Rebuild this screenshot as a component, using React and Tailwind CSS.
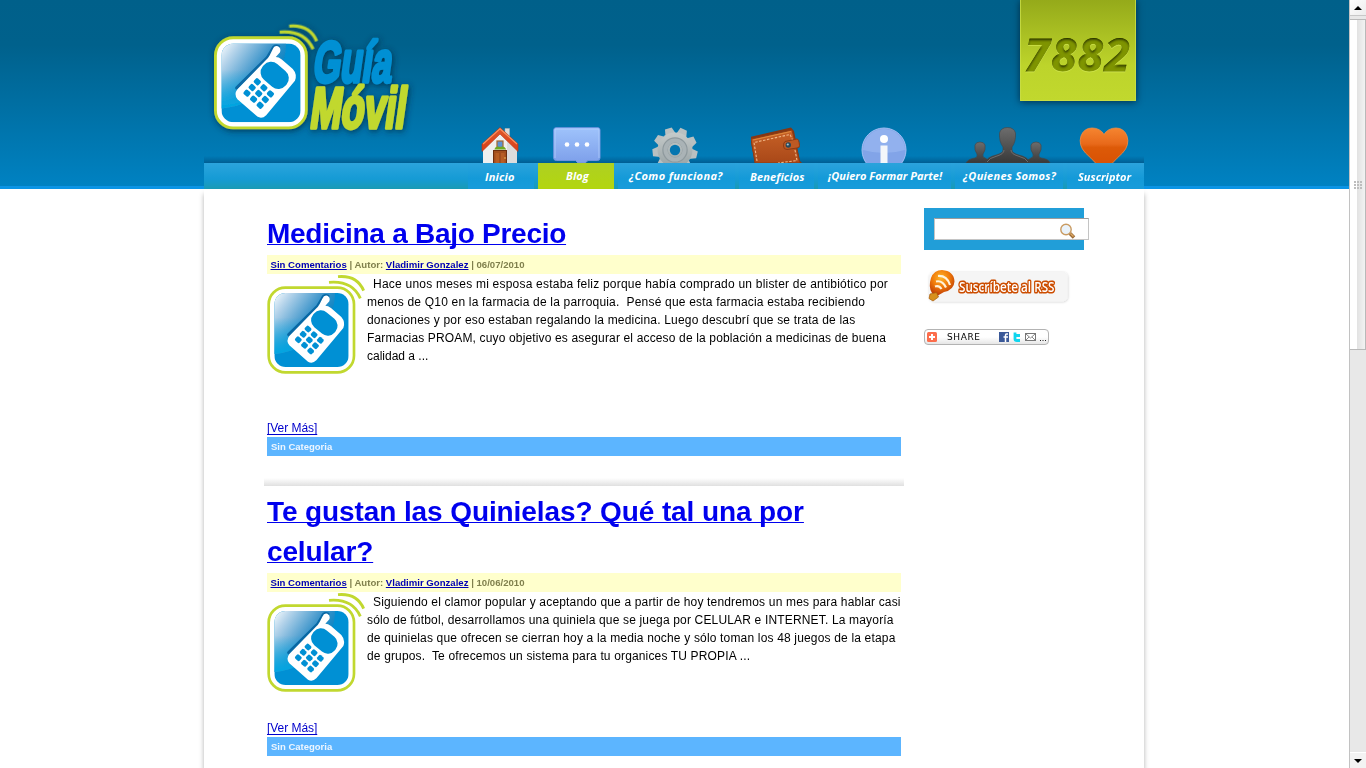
import React from "react";

function PhoneMark({ badge = false }) {
  const id = badge ? "badge" : "post";
  return (
    <>
      <defs>
        <linearGradient id={`shine-${id}`} x1="0" y1="0" x2="0.75" y2="0.55">
          <stop offset="0" stopColor="#f8fcfe" />
          <stop offset="0.25" stopColor="#b4d3ea" />
          <stop offset="0.7" stopColor="#3f96cb" />
          <stop offset="1" stopColor="#0f86c4" />
        </linearGradient>
        <linearGradient id={`low-${id}`} x1="0" y1="0" x2="0" y2="1">
          <stop offset="0.4" stopColor="#00a6e2" stopOpacity="0" />
          <stop offset="1" stopColor="#00a6e2" stopOpacity="1" />
        </linearGradient>
        <clipPath id={`clip-${id}`}>
          <rect x="58" y="249" width="223" height="222" rx="34" />
        </clipPath>
      </defs>
      <rect x="41" y="233" width="256" height="254" rx="50" fill="#fff" stroke="#c1d82f" strokeWidth="8" />
      <g clipPath={`url(#clip-${id})`}>
        <rect x="58" y="249" width="223" height="222" fill="#0090d4" />
        <path d="M58 249H240C240 330 180 420 58 432Z" fill={`url(#shine-${id})`} />
        <path d="M58 249H240C240 330 180 420 58 432Z" fill={`url(#low-${id})`} />
      </g>
      <path d="M101 374L188 288L201 266Q208 252 219 258" fill="none" stroke="#0868a4" strokeWidth="9" strokeLinecap="round" strokeLinejoin="round" />
      <path d="M103 378L182 297Q190 290 194 282L202 266Q207 254 217 257Q227 262 223 274L211 287Q219 287 228 294L259 321Q272 336 265 354L184 451Q172 463 159 455L103 406Q92 392 103 378Z" fill="#fff" />
      <rect x="-42" y="-29" width="84" height="58" rx="27" fill="#0090d4" transform="translate(208 339) rotate(40)" />
      <g fill="#0090d4">
        {[0, 1, 2].map((r) =>
          [0, 1, 2].map((c) => (
            <rect
              key={`${r}-${c}`}
              x="-9"
              y="-8"
              width="18"
              height="16"
              rx="4.500"
              transform={`translate(${159 + r * 18.500 - c * 14.500} ${357 + r * 17 + c * 16}) rotate(42)`}
            />
          ))
        )}
      </g>
      <path d="M222 217Q292 211 316 265M249 200Q306 195 326 242" fill="none" stroke="#c1d82f" strokeWidth="8.500" />
    </>
  );
}

function Logo() {
  return (
    <svg className="block h-[135px] w-[230px] shrink-0 overflow-visible" viewBox="0 0 690 405">
      <defs>
        <filter id="logo-glow" x="-10%" y="-10%" width="120%" height="125%">
          <feDropShadow dx="3" dy="5" stdDeviation="10" floodColor="#002b45" floodOpacity="0.8" />
        </filter>
      </defs>
      <g filter="url(#logo-glow)">
        <g transform="translate(2.6 -164.9) scale(1.065)">
          <PhoneMark badge />
        </g>
        <g fontFamily="Liberation Sans" fontWeight="700" strokeLinejoin="round">
          <text transform="translate(335 216) skewX(-8) scale(.61 1)" fontSize="174" fill="#0090d4" stroke="#0090d4" strokeWidth="11">Guía</text>
          <text transform="translate(326 355) skewX(-8) scale(.645 1)" fontSize="174" fill="#c1d82f" stroke="#c1d82f" strokeWidth="11">Móvil</text>
        </g>
      </g>
    </svg>
  );
}

function NumberBadge() {
  return (
    <svg className="block h-[101px] w-[116px] overflow-visible shadow-[0_1px_7px_rgba(0,25,45,.75)]" viewBox="0 0 116 101">
      <defs>
        <linearGradient id="lime" x1="0" y1="0" x2="0" y2="1">
          <stop offset="0" stopColor="#95aa1a" />
          <stop offset="0.65" stopColor="#bdd42b" />
          <stop offset="1" stopColor="#c1d82e" />
        </linearGradient>
        <filter id="carved" x="-5%" y="-10%" width="110%" height="120%">
          <feOffset in="SourceAlpha" dx="0" dy="2.2" result="o" />
          <feGaussianBlur in="o" stdDeviation="1.3" result="b" />
          <feComposite in="SourceAlpha" in2="b" operator="out" result="edge" />
          <feFlood floodColor="#202a00" />
          <feComposite in2="edge" operator="in" result="dark" />
          <feDropShadow in="SourceGraphic" dx="0" dy="1" stdDeviation="0.4" floodColor="#d2e650" floodOpacity=".7" result="base" />
          <feMerge>
            <feMergeNode in="base" />
            <feMergeNode in="dark" />
          </feMerge>
        </filter>
      </defs>
      <rect width="116" height="101" fill="url(#lime)" />
      <path d="M.5 0V100.500H115.500V0" fill="none" stroke="#c9de49" strokeOpacity=".8" />
      <text x="4.500" y="71" fontFamily="Open Sans" fontWeight="700" fontStyle="italic" fontSize="45.500" textLength="105" fill="#7f9402" stroke="#7f9402" strokeWidth=".8" filter="url(#carved)">7882</text>
    </svg>
  );
}

const svgIcon = "block h-[36px] shrink-0";

function HomeIcon() {
  return (
    <svg className={svgIcon} width="40" viewBox="0 0 40 36">
      <defs>
        <linearGradient id="roof" x1="0" y1="0" x2="0" y2="1">
          <stop offset="0" stopColor="#e0562a" />
          <stop offset="1" stopColor="#d8401a" />
        </linearGradient>
      </defs>
      <path d="M25 1.500H29.500V13H25Z" fill="#dcdcdc" stroke="#b5b5b5" strokeWidth=".5" />
      <path d="M3 20L20 5L37 20V36H3Z" fill="#efefef" />
      <path d="M20 5L37 20V36H27V14Z" fill="#dcdcdc" />
      <path d="M2 17L20 .500L38 17V24.500L20 7L2 24.500Z" fill="url(#roof)" stroke="#b83311" strokeWidth=".6" />
      <path d="M3 17L20 1.800L37 17" fill="none" stroke="#f79463" strokeWidth="1.200" />
      <rect x="17" y="14" width="6" height="6.500" fill="#5b93d6" stroke="#a4682f" strokeWidth="1.200" />
      <path d="M14.500 22Q16 18.500 20 20Q24 18.500 26 22V22.500H14.500Z" fill="#6faa22" />
      <rect x="13.500" y="23.500" width="13" height="13" fill="#a24e1d" stroke="#6c2f10" />
      <path d="M15.500 26H19V36H15.500ZM21 26H24.500V36H21Z" fill="#b75d24" />
      <circle cx="25" cy="31" r=".8" fill="#f1c35d" />
    </svg>
  );
}

function ChatIcon() {
  return (
    <svg className={svgIcon} width="48" viewBox="0 0 48 36">
      <defs>
        <linearGradient id="chat" x1="0" y1="0" x2="0" y2="1">
          <stop offset="0" stopColor="#9fc3fb" />
          <stop offset="1" stopColor="#7d9fea" />
        </linearGradient>
      </defs>
      <path d="M3 .700H45Q47 .700 47 3V31Q47 33.500 44.500 33.500H35L32 36H25L22.500 33.500H3.500Q.700 33.500 .700 31V3Q.700 .700 3 .700Z" fill="url(#chat)" stroke="#6e94df" />
      <path d="M2 31V2H46V31" fill="none" stroke="#b9d4ff" strokeWidth=".7" />
      <g fill="#fff">
        <circle cx="14" cy="17.500" r="2.300" />
        <circle cx="24" cy="17.500" r="2.300" />
        <circle cx="34" cy="17.500" r="2.300" />
      </g>
    </svg>
  );
}

function GearIcon() {
  return (
    <svg className={svgIcon} width="46" viewBox="0 0 46 36">
      <defs>
        <linearGradient id="gear" gradientUnits="userSpaceOnUse" x1="0" y1="0" x2="0" y2="40">
          <stop offset="0" stopColor="#cdd1d0" />
          <stop offset="1" stopColor="#98a3a5" />
        </linearGradient>
      </defs>
      <g fill="#b9c0c1">
        {[-16, 24, 64, 104, 144, 184, 224, 264, 304].map((a) => (
          <path key={a} d="M17.500 8L19 .500H26L28.500 8Z" transform={`rotate(${a} 23 23)`} />
        ))}
      </g>
      <circle cx="23" cy="23" r="17.500" fill="url(#gear)" />
      <circle cx="23" cy="23" r="10" fill="none" stroke="#8f9a9e" strokeWidth="5.500" />
      <circle cx="23" cy="23" r="9.500" fill="none" stroke="#aab3b6" strokeWidth="4" />
      <circle cx="23" cy="23" r="5.200" fill="#0576b0" />
    </svg>
  );
}

function WalletIcon() {
  return (
    <svg className={svgIcon} width="52" viewBox="0 0 52 36">
      <defs>
        <linearGradient id="wallet" x1="0" y1="0" x2="0" y2="1">
          <stop offset="0" stopColor="#c76127" />
          <stop offset="1" stopColor="#a94818" />
        </linearGradient>
      </defs>
      <path d="M-1 10L40 .500L43 4L49 34L51 36H4Z" fill="#853713" />
      <path d="M0 12L41 3L49 36H4Z" fill="url(#wallet)" stroke="#8d3d14" />
      <path d="M2 13L40 4.500" stroke="#df8a3c" strokeWidth="1.200" />
      <path d="M6 34L3 15.500L39 7.500L42 14M44 23L46 33.500L27 36" fill="none" stroke="#f2b887" strokeWidth="1.100" strokeDasharray="2.500 1.500" />
      <path d="M34 14.500L46 12Q48 12 48.500 18.500Q49 20.500 46 21L36 22.500Q32.500 22.500 32.500 19Q32.500 15.500 34 14.500Z" fill="#bd5923" stroke="#8b3a13" />
      <circle cx="37.300" cy="18" r="2.700" fill="#29495c" />
      <circle cx="36.800" cy="17.500" r="1.100" fill="#a8c8d4" />
    </svg>
  );
}

function InfoIcon() {
  return (
    <svg className={svgIcon} width="46" viewBox="0 0 46 36">
      <circle cx="23" cy="23" r="22" fill="#82a4e8" stroke="#a3bff3" strokeWidth="1" />
      <path d="M2 23A21 21 0 0 1 44 23Q23 29 2 23Z" fill="#9dbaf2" opacity=".6" />
      <circle cx="23" cy="12" r="4" fill="#fff" />
      <path d="M19.500 18.500H26.500V36H19.500Z" fill="#f4f6fa" />
    </svg>
  );
}

function PeopleIcon() {
  return (
    <svg className={svgIcon} width="86" viewBox="0 0 86 36">
      <defs>
        <linearGradient id="crowd" x1="0" y1="0" x2="0" y2="1">
          <stop offset="0" stopColor="#6d6d6d" />
          <stop offset="1" stopColor="#383838" />
        </linearGradient>
      </defs>
      <g fill="url(#crowd)" stroke="#444" strokeWidth=".6">
        <path d="M1 36Q3 32 10 31Q13 30 12 27Q9 23 10 18Q11 15 15 15Q19 15 20 18Q21 23 18 27Q17 30 20 31L28 36Z" />
        <path d="M58 36L66 31Q69 30 68 27Q65 23 66 18Q67 15 71 15Q75 15 76 18Q77 23 74 27Q73 30 76 31Q84 32 85 36Z" />
        <path d="M20 36Q22 30 31 28Q38 26 38 23V20Q34 15 34.500 6Q36 .500 42.500 .500Q49 .500 50.500 6Q51 15 47 20V23Q47 26 54 28Q63 30 65 36Z" />
      </g>
      <path d="M22 35Q24 31 32 29Q39 27 39 23M46 23Q46 27 53 29Q61 31 63 35" fill="none" stroke="#777" strokeWidth=".8" />
    </svg>
  );
}

function HeartIcon() {
  return (
    <svg className={svgIcon} width="50" viewBox="0 0 50 36">
      <defs>
        <linearGradient id="heart" x1="0" y1="0" x2="0" y2="1">
          <stop offset="0" stopColor="#f58530" />
          <stop offset="0.45" stopColor="#e8691a" />
          <stop offset="0.55" stopColor="#dd5a08" />
          <stop offset="1" stopColor="#d95204" />
        </linearGradient>
      </defs>
      <path d="M25 7.500Q21 1 13 1Q5 1 2 9Q-1 18 6.500 26Q12 31 17 36.500H33Q38 31 43.500 26Q51 18 48 9Q45 1 37 1Q29 1 25 7.500Z" fill="url(#heart)" stroke="#ef8d45" strokeWidth=".8" />
    </svg>
  );
}

const navItems = [
  { label: "Inicio", Icon: HomeIcon, box: "w-[66px]", icon: "pl-[12px]", text: "pl-[17px] pt-[5px] tracking-[0.2px]" },
  { label: "Blog", Icon: ChatIcon, box: "w-[76px]", icon: "pl-[15px]", text: "pl-[28px] pt-[4px] tracking-[0.1px]", active: true },
  { label: "¿Como funciona?", Icon: GearIcon, box: "w-[117px]", icon: "pl-[34px]", text: "pl-[11px] pt-[4px] tracking-[0.38px]" },
  { label: "Beneficios", Icon: WalletIcon, box: "w-[75px]", icon: "pl-[12px]", text: "pl-[11px] pt-[5px] tracking-[0.12px]" },
  { label: "¡Quiero Formar Parte!", Icon: InfoIcon, box: "w-[133px]", icon: "pl-[43px]", text: "pl-[10px] pt-[4px] tracking-[0.02px]" },
  { label: "¿Quienes Somos?", Icon: PeopleIcon, box: "w-[108px]", icon: "pl-[10px]", text: "pl-[8px] pt-[4px] tracking-[0.28px]" },
  { label: "Suscriptor", Icon: HeartIcon, box: "w-[77px]", icon: "pl-[12px]", text: "pl-[11px] pt-[5px] tracking-[0px]" },
];

function Header() {
  return (
    <header className="h-[189px] border-b-[3px] border-[#0b94e5] bg-[linear-gradient(#00608a_0px,#00618c_45px,#0082c2_186px)] pl-[204px]">
      <div className="flex h-[189px] w-[940px] flex-col">
        <div className="flex h-[127px] justify-between pr-[8px]">
          <div className="-ml-[4px] pt-[10px]">
            <Logo />
          </div>
          <NumberBadge />
        </div>
        <nav className="flex h-[62px] gap-[4px] bg-[linear-gradient(transparent_29px,rgba(0,50,90,.4)_36px,#2ba4dd_36px,#159bd5_52px,#1a9bb4_62px)] pl-[264px]">
          {navItems.map(({ label, Icon, box, icon, text, active }) => (
            <a key={label} className={`${box} flex shrink-0 flex-col`}>
              <span className={`${icon} flex h-[36px]`}>
                <Icon />
              </span>
              <span
                className={`${text} h-[26px] whitespace-nowrap font-['Open_Sans'] text-[11px] font-bold italic leading-[17px] text-white ${
                  active ? "bg-[linear-gradient(#aed022,#b3d60f)]" : "bg-[linear-gradient(#2ba3dc,#149ad8_60%,#189cdb)]"
                }`}
              >
                {label}
              </span>
            </a>
          ))}
        </nav>
      </div>
    </header>
  );
}

function Post({ title, date, lines, height }) {
  return (
    <article className="w-[634px]">
      <h2 className="pt-px text-[28px] font-bold leading-[40px] text-[#0000ee]">
        {title.map((t) => (
          <a key={t.text} className={`block w-max underline decoration-[1px] underline-offset-[1px] [text-decoration-skip-ink:none] ${t.fit}`}>
            {t.text}
          </a>
        ))}
      </h2>
      <p className="mb-px mt-px h-[19px] whitespace-pre bg-[#ffffcc] pl-[3.500px] text-[9.600px] font-bold leading-[19px] text-[#80804d]">
        <a className="text-[#0000b4] underline">Sin Comentarios</a> | Autor: <a className="text-[#0000b4] underline">Vladimir Gonzalez</a> | {date}
      </p>
      <div className={`flex ${height}`}>
        <svg className="h-[100px] w-[98px] shrink-0" viewBox="36 195 294 300">
          <PhoneMark />
        </svg>
        <div className="pl-[2px] text-[12px] leading-[18px] text-black">
          {lines.map((l) => (
            <p key={l.text} className={`whitespace-pre ${l.fit}`}>
              {l.text}
            </p>
          ))}
        </div>
      </div>
      <p className="h-[18px] text-[12px] leading-[18px] tracking-[-0.05px] text-[#0000cc]">
        <a className="underline underline-offset-[2px] [text-decoration-skip-ink:none]">[Ver Más]</a>
      </p>
      <p className="h-[19px] bg-[#5cb5ff] pl-[4px] text-[9.500px] font-bold leading-[19px] text-[#eef6ff]">Sin Categoria</p>
    </article>
  );
}

function Sidebar() {
  return (
    <aside className="w-[170px] pt-[19px]">
      <div className="h-[42px] w-[160px] bg-[#219ed8] pl-[10px] pt-[10px]">
        <div className="flex h-[22px] w-[155px] items-center justify-end border border-[#c4c4c4] border-t-[#9c9c9c] bg-white pr-[12px]">
          <svg className="mt-[4px] h-[16px] w-[16px]" viewBox="0 0 16 16">
            <path d="M10 10.500L14 14.500" stroke="#9c6a34" strokeWidth="3.500" />
            <path d="M10.500 10.500L13.500 13.500" stroke="#dca866" strokeWidth="1.500" />
            <circle cx="6" cy="6.500" r="5.200" fill="#eaf3fb" stroke="#c99b62" strokeWidth="1.400" />
          </svg>
        </div>
      </div>
      <svg className="mt-[17px] block h-[40px] w-[150px] overflow-visible" viewBox="0 0 150 40">
        <defs>
          <radialGradient id="balloon" cx=".45" cy=".3" r=".7">
            <stop offset="0" stopColor="#ffb529" />
            <stop offset=".5" stopColor="#f07a09" />
            <stop offset="1" stopColor="#b93706" />
          </radialGradient>
          <filter id="soft" x="-5%" y="-20%" width="110%" height="140%">
            <feDropShadow dx="0.5" dy="0.5" stdDeviation="1" floodOpacity=".2" />
          </filter>
        </defs>
        <rect x="5" y="5" width="138.500" height="29.500" rx="5" fill="#f5f5f5" filter="url(#soft)" />
        <path d="M8 26Q4 20 7 11Q10 3 18 3Q30 4 30.500 14.500Q30 23 20 25L13 29Z" fill="url(#balloon)" />
        <g fill="none" stroke="#fff3dc" strokeWidth="2.200">
          <path d="M11 19.500Q15 18 17.500 22" />
          <path d="M12 14.500Q18.500 13 22 20.500" />
          <path d="M14 9Q23 8.500 26 18" />
        </g>
        <path d="M6 27L12.500 25.500L14.500 30L9 34L5 31.500Z" fill="#d7901d" stroke="#a65a0c" strokeWidth=".7" />
        <text x="35" y="25" fontFamily="Open Sans" fontSize="14.500" fontWeight="600" fill="#fff" stroke="#cc4d00" strokeWidth="3.200" strokeLinejoin="round" paintOrder="stroke" textLength="95.500" lengthAdjust="spacingAndGlyphs">
          Suscríbete al RSS
        </text>
      </svg>
      <div className="mt-[22px] flex h-[16px] w-[125px] items-center rounded-[4px] border border-[#b3b3b3] bg-[linear-gradient(#fff_50%,#e6e6e6)] pl-[2px]">
        <svg className="h-[10px] w-[10px] shrink-0" viewBox="0 0 10 10">
          <rect width="10" height="10" rx="1.500" fill="#fc6d4c" />
          <path d="M5 2V8M2 5H8" stroke="#fff" strokeWidth="2" />
        </svg>
        <span className="w-[62px] pl-[10px] font-['DejaVu_Sans'] text-[9px] leading-[14px] tracking-[0.6px] text-black">SHARE</span>
        <svg className="h-[12px] w-[48px] shrink-0" viewBox="0 0 48 12">
          <rect y="1" width="10" height="10" fill="#3b5998" />
          <path d="M9 3H7.500Q6.500 3 6.500 4.500V11M4.500 6H9" fill="none" stroke="#fff" strokeWidth="1.500" />
          <path d="M16 1.500V8Q16 9.500 18 9.500H21M16 4.500H21" fill="none" stroke="#10d5ee" strokeWidth="2.800" />
          <rect x="26.500" y="2.500" width="10" height="7" fill="#fff" stroke="#777" />
          <path d="M27 3L31.500 7L36 3M27 9L30 6M36 9L33 6" fill="none" stroke="#888" />
          <path d="M41 9.500H42M43.500 9.500H44.500M46 9.500H47" stroke="#222" />
        </svg>
      </div>
    </aside>
  );
}

function Scrollbar() {
  return (
    <div className="flex h-[768px] w-[17px] shrink-0 flex-col border-l border-[#c2c2c2] bg-[#e8e8e8]">
      <div className="flex h-[16px] items-center justify-center border-b border-[#c8c8c8] bg-[linear-gradient(135deg,#fff,#ececec)]">
        <svg width="8" height="4" viewBox="0 0 8 4">
          <path d="M4 0L8 4H0Z" fill="#000" />
        </svg>
      </div>
      <div className="mt-[3px] flex h-[331px] items-center justify-center border border-l-0 border-[#b9b9b9] bg-[linear-gradient(90deg,#fff_45%,#e3e3e3_50%,#f2f2f2)]">
        <div className="grid grid-cols-3 gap-px">
          {[0, 1, 2, 3, 4, 5, 6, 7, 8].map((i) => (
            <i key={i} className="h-[2px] w-[2px] bg-[#bdbdbd]" />
          ))}
        </div>
      </div>
      <div className="mt-auto flex h-[16px] items-center justify-center border-t border-[#fff] bg-[#f3f3f3]">
        <svg width="8" height="4" viewBox="0 0 8 4">
          <path d="M0 0H8L4 4Z" fill="#000" />
        </svg>
      </div>
    </div>
  );
}

const first = [
  { text: "  Hace unos meses mi esposa estaba feliz porque había comprado un blister de antibiótico por", fit: "tracking-[0.215px] -ml-px" },
  { text: "menos de Q10 en la farmacia de la parroquia.  Pensé que esta farmacia estaba recibiendo", fit: "tracking-[0.19px]" },
  { text: "donaciones y por eso estaban regalando la medicina. Luego descubrí que se trata de las", fit: "tracking-[0.186px]" },
  { text: "Farmacias PROAM, cuyo objetivo es asegurar el acceso de la población a medicinas de buena", fit: "tracking-[0.15px]" },
  { text: "calidad a ...", fit: "tracking-[0px]" },
];

const second = [
  { text: "  Siguiendo el clamor popular y aceptando que a partir de hoy tendremos un mes para hablar casi", fit: "tracking-[0.165px] -ml-px" },
  { text: "sólo de fútbol, desarrollamos una quiniela que se juega por CELULAR e INTERNET. La mayoría", fit: "tracking-[0.167px]" },
  { text: "de quinielas que ofrecen se cierran hoy a la media noche y sólo toman los 48 juegos de la etapa", fit: "tracking-[0.17px]" },
  { text: "de grupos.  Te ofrecemos un sistema para tu organices TU PROPIA ...", fit: "tracking-[0.15px]" },
];

export default function App() {
  return (
    <div className="flex h-[768px] w-[1366px] overflow-hidden bg-white font-['Liberation_Sans',Arial,sans-serif]">
      <div className="flex w-[1349px] flex-col">
        <Header />
        <main className="ml-[204px] flex h-[579px] w-[940px] bg-white pl-[60px] shadow-[0_5px_5px_rgba(0,0,0,.3)]">
          <section className="w-[660px] pt-[24px]">
            <div className="pl-[3px]">
              <Post title={[{ text: "Medicina a Bajo Precio", fit: "tracking-[-0.27px]" }]} date="06/07/2010" lines={first} height="h-[144px]" />
            </div>
            <div className="mb-[5px] mt-[22px] h-[8px] w-[640px] bg-[linear-gradient(#fff,#e0e0e0)]" />
            <div className="pl-[3px]">
              <Post
                title={[
                  { text: "Te gustan las Quinielas? Qué tal una por", fit: "tracking-[-0.1px]" },
                  { text: "celular?", fit: "tracking-[-0.15px]" },
                ]}
                date="10/06/2010"
                lines={second}
                height="h-[126px]"
              />
            </div>
          </section>
          <Sidebar />
        </main>
      </div>
      <Scrollbar />
    </div>
  );
}
